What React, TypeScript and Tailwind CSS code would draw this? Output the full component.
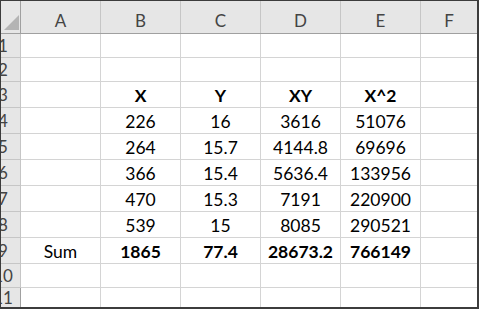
import React from "react";

const cols = ["A", "B", "C", "D", "E", "F"];

type Row = { n: number; h: string; cells: string[]; bold?: boolean; last?: boolean };

const rows: Row[] = [
  { n: 1, h: "h-[24px]", cells: ["", "", "", "", "", ""] },
  { n: 2, h: "h-[24px]", cells: ["", "", "", "", "", ""] },
  { n: 3, h: "h-[26px]", cells: ["", "X", "Y", "XY", "X^2", ""], bold: true },
  { n: 4, h: "h-[26px]", cells: ["", "226", "16", "3616", "51076", ""] },
  { n: 5, h: "h-[26px]", cells: ["", "264", "15.7", "4144.8", "69696", ""] },
  { n: 6, h: "h-[26px]", cells: ["", "366", "15.4", "5636.4", "133956", ""] },
  { n: 7, h: "h-[26px]", cells: ["", "470", "15.3", "7191", "220900", ""] },
  { n: 8, h: "h-[26px]", cells: ["", "539", "15", "8085", "290521", ""] },
  { n: 9, h: "h-[26px]", cells: ["Sum", "1865", "77.4", "28673.2", "766149", ""], bold: true },
  { n: 10, h: "h-[24px]", cells: ["", "", "", "", "", ""] },
  { n: 11, h: "h-[19px]", cells: ["", "", "", "", "", ""], last: true },
];

export default function App() {
  return (
    <div
      className="w-[479px] h-[309px] bg-white border-t border-l border-r-2 border-b-2 border-[#3c3c3c] flex flex-col overflow-hidden"
      style={{ fontFamily: "Lato, 'Open Sans', sans-serif" }}
    >
      {/* column header */}
      <div className="flex h-[33px] shrink-0 bg-[#e6e6e6] border-b border-[#a0a0a0]">
        <div className="w-[20px] shrink-0 border-r border-[#a0a0a0] relative">
          <svg width="19" height="32" className="block">
            <polygon points="3,29 18,29 18,14" fill="#b4b4b4" />
          </svg>
        </div>
        {cols.map((c, i) => (
          <div
            key={c}
            className={`${i < 5 ? "w-[80px] border-r border-[#c6c6c6]" : "flex-1"} shrink-0 flex items-end justify-center pb-[4px] text-[17px] leading-none text-[#444444]`}
          >
            {c}
          </div>
        ))}
      </div>
      {rows.map((r) => (
        <div key={r.n} className={`flex ${r.h} shrink-0`}>
          <div
            className={`w-[20px] shrink-0 bg-[#e6e6e6] border-r border-[#a0a0a0] ${r.last ? "" : "border-b border-[#c6c6c6]"} overflow-hidden flex items-center`}
          >
            <div className="w-[40px] shrink-0 -ml-[18px] text-center text-[17px] leading-none text-[#444444]">
              {r.n}
            </div>
          </div>
          {r.cells.map((v, i) => (
            <div
              key={i}
              className={`${i < 5 ? "w-[80px] border-r" : "flex-1"} shrink-0 ${r.last ? "" : "border-b"} border-[#d4d4d4] flex items-center justify-center pt-[2px] text-[17.5px] leading-none text-black ${r.bold && i > 0 ? "font-bold" : ""} ${r.bold && i === 0 ? "font-normal" : ""}`}
            >
              {v}
            </div>
          ))}
        </div>
      ))}
    </div>
  );
}
